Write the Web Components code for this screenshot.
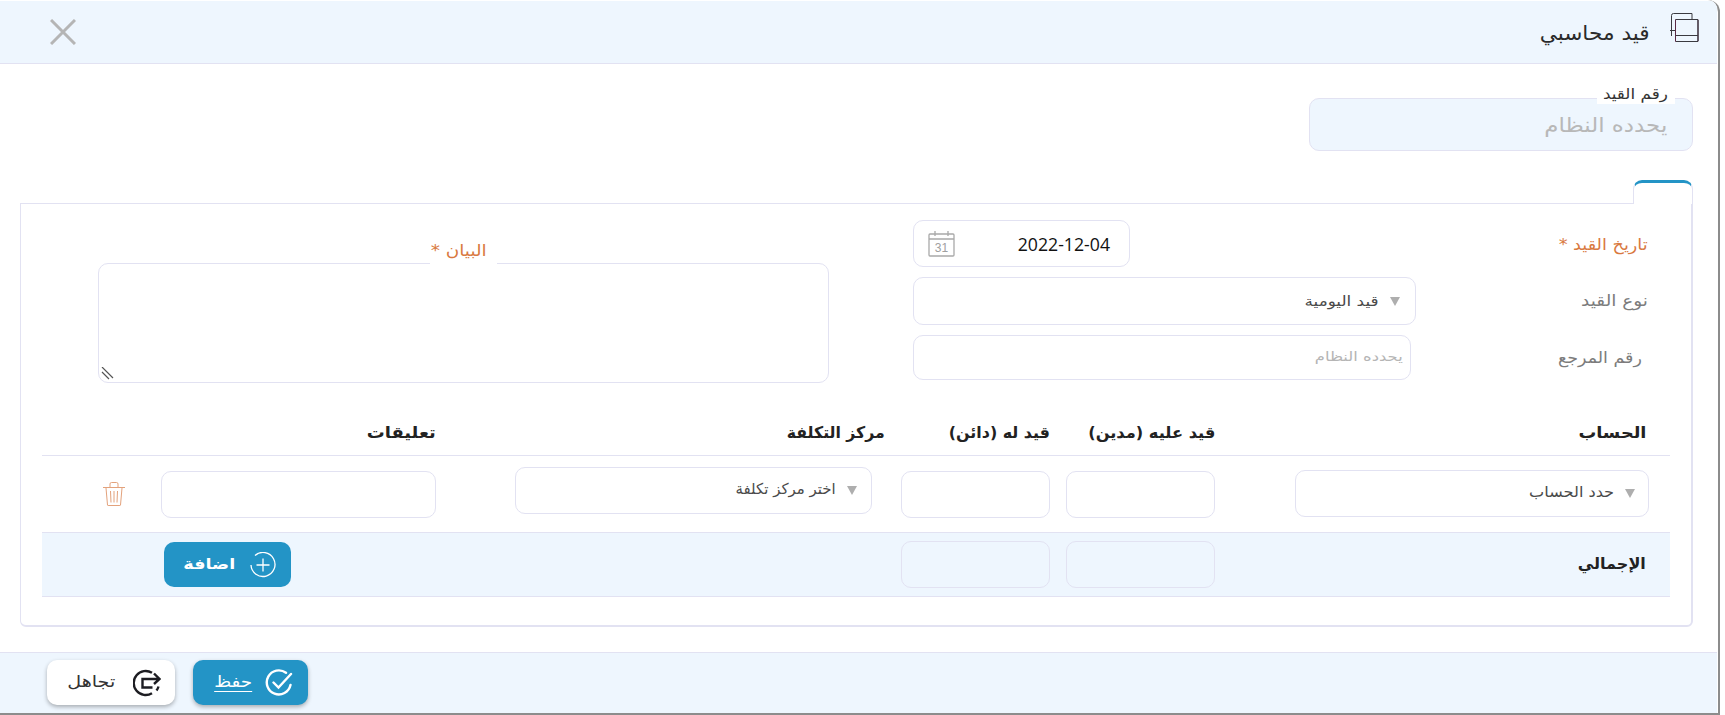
<!DOCTYPE html>
<html lang="ar" dir="rtl">
<head>
<meta charset="utf-8">
<title>قيد محاسبي</title>
<style>
  html, body { margin: 0; padding: 0; height: 100%; background: #fff; }
  body { font-family: "DejaVu Sans", "Noto Sans", sans-serif; overflow: hidden; }
</style>
</head>
<body>
<entry-dialog>
  <dialog-header slot="header"></dialog-header>
  <outlined-box slot="number"></outlined-box>
  <entry-form slot="form"></entry-form>
  <dialog-footer slot="footer"></dialog-footer>
</entry-dialog>

<script>
const FONT = '"DejaVu Sans", "Noto Sans", sans-serif';
const LINE = '#e2e2f2';
const TINT = '#eef6fe';
const BLUE = '#2394c6';

// the original arabic face is much wider than DejaVu, so stretch each label to its width
class FitText extends HTMLElement {
  constructor() {
    super();
    this.attachShadow({ mode: 'open' });
    this.shadowRoot.innerHTML = `
      <style>
        :host { display: inline-block; white-space: nowrap; font-family: ${FONT}; line-height: 1.3; }
        span { display: inline-block; transform-origin: 100% 50%; text-decoration: var(--deco, none); text-underline-offset: 4px; }
      </style>
      <span><slot></slot></span>
    `;
  }
  connectedCallback() {
    const size = this.getAttribute('size');
    const w = parseFloat(this.getAttribute('w'));
    if (size) this.style.fontSize = size + 'px';
    const inner = this.shadowRoot.querySelector('span');
    const natural = inner.getBoundingClientRect().width;
    if (w && natural) {
      inner.style.transform = `scaleX(${w / natural})`;
      this.style.width = w + 'px';
    }
  }
}

class EntryDialog extends HTMLElement {
  constructor() {
    super();
    this.attachShadow({ mode: 'open' });
    this.shadowRoot.innerHTML = `
      <style>
        :host { display: flex; flex-direction: column; width: 1720px; height: 715px; margin-right: 5px;
          box-sizing: border-box; background: #fff; border-right: 2px solid #8c8c8c; border-bottom: 2px solid #8c8c8c;
          border-top-right-radius: 12px; overflow: hidden; }
        .body { flex: 1; padding: 34px 25px 0 0; }
        .tabs { display: flex; margin-top: 29px; height: 23px; }
        .tab { width: 60px; height: 24px; box-sizing: border-box; border: 1px solid ${LINE}; border-top: 3px solid ${BLUE};
          border-bottom: 0; border-radius: 9px 9px 0 0; background: #fff; position: relative; z-index: 1; }
        .panel { margin-left: 20px; height: 424px; box-sizing: border-box; border: 1px solid ${LINE}; border-right-width: 2px; border-bottom-width: 2px;
          border-radius: 0 0 6px 6px; }
      </style>
      <slot name="header"></slot>
      <div class="body">
        <slot name="number"></slot>
        <div class="tabs"><div class="tab"></div></div>
        <div class="panel"><slot name="form"></slot></div>
      </div>
      <slot name="footer"></slot>
    `;
  }
}

class DialogHeader extends HTMLElement {
  constructor() {
    super();
    this.attachShadow({ mode: 'open' });
    this.shadowRoot.innerHTML = `
      <style>
        :host { display: flex; align-items: center; height: 63px; box-sizing: border-box; margin: 1px 1px 0 0; background: ${TINT};
          border-bottom: 1px solid ${LINE}; padding: 0 18px 0 50px; color: #2a2a2a; }
        svg.copy { display: block; margin-top: -10px; flex: none; }
        .title { flex: 1; margin-right: 20px; display: flex; margin-top: 2px; }
        svg.x { display: block; margin-top: -1px; flex: none; }
      </style>
      <svg class="copy" width="29" height="29" viewBox="0 0 29 29" fill="none" stroke="#3a3a40" stroke-width="1">
        <path d="M1.500 23V2.500a2 2 0 0 1 2-2H22V6"/>
        <path d="M0 17.500h5.500"/>
        <path d="M5.500 6.500h22.500v22H5.500z" stroke="#5a2a46"/>
        <path d="M5.500 22.500h22.500M6 6.500h22M28 7v21M6 28.500h22" stroke-width="1.200"/>
      </svg>
      <div class="title"><fit-text size="20" w="110">قيد محاسبي</fit-text></div>
      <svg class="x" width="26" height="26" viewBox="0 0 26 26" stroke="#b5b5b5" stroke-width="3"><path d="M1 1l24 24M25 1L1 25"/></svg>
    `;
  }
}

// input looking box with the small label that cuts the top border
class OutlinedBox extends HTMLElement {
  constructor() {
    super();
    this.attachShadow({ mode: 'open' });
    this.shadowRoot.innerHTML = `
      <style>
        :host { display: flex; align-items: center; width: 384px; height: 53px; box-sizing: border-box; position: relative; background: ${TINT};
          border: 1px solid ${LINE}; border-radius: 10px; padding-right: 25px; color: #b8b8b8; }
        label { position: absolute; top: -15px; right: 17px; width: 78px; height: 20px; background: #fff; box-sizing: border-box;
          padding-right: 7px; color: #333; display: block; }
      </style>
      <label><fit-text size="15" w="65">رقم القيد</fit-text></label>
      <fit-text size="20" w="123">يحدده النظام</fit-text>
    `;
  }
}

class FieldBox extends HTMLElement {
  static get observedAttributes() { return ['width', 'height']; }
  constructor() {
    super();
    this.attachShadow({ mode: 'open' });
    this.shadowRoot.innerHTML = `
      <style>
        :host { display: flex; align-items: center; box-sizing: border-box; flex: none; background: #fff; border: 1px solid ${LINE};
          border-radius: 10px; padding-right: 14px; font-family: ${FONT}; color: #4a4a4a; }
        :host([tinted]) { background: ${TINT}; }
        :host([dim]) { color: #b5b5b5; }
        .arrow { display: none; width: 0; height: 0; border-left: 5.500px solid transparent; border-right: 5.500px solid transparent;
          border-top: 9px solid #aeaeae; margin: 1px 0 0 11px; }
        :host([select]) .arrow { display: block; }
      </style>
      <i class="arrow"></i><slot></slot>
    `;
  }
  attributeChangedCallback() {
    this.style.width = this.getAttribute('width') + 'px';
    this.style.height = (this.getAttribute('height') || 47) + 'px';
  }
}

class EntryForm extends HTMLElement {
  constructor() {
    super();
    this.attachShadow({ mode: 'open' });
    this.shadowRoot.innerHTML = `
      <style>
        :host { display: block; font-family: ${FONT}; color: #222; }
        .top { display: flex; height: 203px; padding-top: 16px; box-sizing: border-box; }
        .fields { width: 778px; flex: none; display: grid; grid-template-columns: 275px 503px; row-gap: 10px; align-content: start; align-items: center; }
        .lbl { color: #7c7c7c; padding-right: 43px; white-space: nowrap; display: flex; }
        .req { color: #d9793f; margin-top: 3px; }
        .ctl { display: flex; justify-content: flex-end; }
        .area { flex: none; width: 731px; height: 120px; margin: 43px 84px 0 0; box-sizing: border-box; border: 1px solid ${LINE}; border-radius: 10px; position: relative; }
        .area label { position: absolute; top: -24px; right: 331px; width: 67px; height: 27px; background: #fff; box-sizing: border-box; padding: 1px 10px 0 0; color: #d9793f; display: block; }
        .area svg { position: absolute; left: 1px; bottom: 2px; }
        .table { margin: 0 21px; }
        .tr { display: grid; grid-template-columns: 21px 354px 80px 149px 16px 149px 29px 357px 79px 275px 1fr; align-items: center; }
        .head { height: 49px; border-bottom: 1px solid ${LINE}; font-weight: 700; padding-top: 4px; box-sizing: border-box; }
        .head div { white-space: nowrap; display: flex; }
        .row { height: 76px; }
        .total { height: 65px; background: ${TINT}; border-top: 1px solid ${LINE}; border-bottom: 1px solid ${LINE}; box-sizing: border-box; font-weight: 700; }
        .a { grid-column: 1 / 3; padding-right: 24px; display: flex; }
        .d { grid-column: 3 / 5; padding-right: 80px; }
        .c { grid-column: 5 / 7; padding-right: 16px; }
        .cc { grid-column: 7 / 9; padding-right: 16px; }
        .n { grid-column: 9 / 11; padding-right: 79px; }
        .trash { justify-self: start; margin-right: 36px; display: block; }
      </style>
      <div class="top">
        <div class="fields">
          <div class="lbl req"><fit-text size="16" w="89">تاريخ القيد *</fit-text></div>
          <div class="ctl"><field-box width="217" height="47" style="direction:ltr;padding:0 19px 0 14px;color:#111">
            <span style="display:flex;align-items:center;justify-content:space-between;width:182px;font-family:'Open Sans',sans-serif;font-size:17.700px">
              <svg width="27" height="26" viewBox="0 0 27 26" fill="none" stroke="#a9a9a9" stroke-width="1.300"><rect x="1" y="3" width="25" height="22" rx="1"/><path d="M1 8h25M7 0v5M20 0v5"/><text x="13.500" y="21" font-size="12" text-anchor="middle" stroke="none" fill="#a0a0a0" font-family="Liberation Sans">31</text></svg>
              <span>2022-12-04</span>
            </span>
          </field-box></div>
          <div class="lbl"><fit-text size="16" w="67">نوع القيد</fit-text></div>
          <div class="ctl"><field-box select width="503" height="48" style="padding-right:15px"><fit-text size="14" w="74">قيد اليومية</fit-text></field-box></div>
          <div class="lbl" style="padding-right:49px;margin-top:2px"><fit-text size="16" w="84">رقم المرجع</fit-text></div>
          <div class="ctl"><field-box dim width="498" height="45" style="padding-right:7px"><fit-text size="13" w="88">يحدده النظام</fit-text></field-box></div>
        </div>
        <div class="area">
          <label><fit-text size="16" w="56">البيان *</fit-text></label>
          <svg width="14" height="13" viewBox="0 0 14 13" stroke="#555" stroke-width="1.200"><path d="M2 0l11 11M2 5l7 7"/></svg>
        </div>
      </div>
      <div class="table">
        <div class="tr head">
          <div class="a"><fit-text size="16" w="68">الحساب</fit-text></div>
          <div class="d"><fit-text size="16" w="127">قيد عليه (مدين)</fit-text></div>
          <div class="c"><fit-text size="16" w="101">قيد له (دائن)</fit-text></div>
          <div class="cc"><fit-text size="16" w="98">مركز التكلفة</fit-text></div>
          <div class="n"><fit-text size="16" w="69">تعليقات</fit-text></div>
        </div>
        <div class="tr row">
          <field-box select width="354" height="47" style="grid-column:2;padding-right:13px;margin-top:-2px"><fit-text size="15" w="85">حدد الحساب</fit-text></field-box>
          <field-box width="149" height="47" style="grid-column:4"></field-box>
          <field-box width="149" height="47" style="grid-column:6"></field-box>
          <field-box select width="357" height="47" style="grid-column:8;padding-right:14px;margin-top:-8px"><fit-text size="15" w="100">اختر مركز تكلفة</fit-text></field-box>
          <field-box width="275" height="47" style="grid-column:10"></field-box>
          <svg class="trash" style="grid-column:11" width="22" height="24" viewBox="0 0 22 24" fill="none" stroke="#e3a27c" stroke-width="1"><path d="M0 5.500h22M7 5V2a1.500 1.500 0 0 1 1.500-1.500h5A1.500 1.500 0 0 1 15 2v3M3 6l1.500 17a.6.6 0 0 0 .6.5h11.800a.6.6 0 0 0 .6-.5L19 6M7.500 9l.5 11.500M11 9v11.500M14.500 9L14 20.500"/></svg>
        </div>
        <div class="tr total">
          <div class="a"><fit-text size="16" w="68">الإجمالي</fit-text></div>
          <field-box tinted width="149" height="47" style="grid-column:4"></field-box>
          <field-box tinted width="149" height="47" style="grid-column:6"></field-box>
          <action-button primary bold icon="plus" width="127" gap="14" style="grid-column:10;justify-self:end;margin-left:3px;padding-left:4px"><fit-text size="15" w="52">اضافة</fit-text></action-button>
        </div>
      </div>
    `;
  }
}

const ICONS = {
  plus: `<svg width="26" height="26" viewBox="0 0 26 26" fill="none" stroke="#fff" stroke-width="1.300"><path d="M5 3.500A12 12 0 1 1 1 13M13 6.500v13M6.500 13h13"/></svg>`,
  check: `<svg width="28" height="28" viewBox="0 0 28 28" fill="none" stroke="#fff" stroke-width="2.400" stroke-linecap="round"><path d="M21 3.800A12 12 0 1 0 25.500 16M8.500 13.500l5 5L26 5"/></svg>`,
  exit: `<svg width="28" height="28" viewBox="0 0 28 28" fill="none" stroke="#1d1d22" stroke-width="2.400"><path d="M19 3.800A12 12 0 1 0 19 24.200M25.500 17.500a12 12 0 0 1-2 4"/><path d="M26.500 10H9.500v8.500h10M21 4.500l5.500 5.500-5.500 5"/></svg>`
};

class ActionButton extends HTMLElement {
  constructor() {
    super();
    this.attachShadow({ mode: 'open' });
    this.shadowRoot.innerHTML = `
      <style>
        :host { display: flex; align-items: center; justify-content: center; height: 45px; box-sizing: border-box; border-radius: 10px;
          padding-left: 6px; background: #fff; color: #333; font-weight: 400; }
        :host([primary]) { background: ${BLUE}; color: #fff; }
        :host([bold]) { font-weight: 700; }
        :host([raised]) { box-shadow: 0 2px 4px rgba(0,0,0,.3); }
        svg { display: block; flex: none; }
      </style>
      ${ICONS[this.getAttribute('icon')] || ''}<slot></slot>
    `;
    this.style.width = this.getAttribute('width') + 'px';
    this.style.gap = (this.getAttribute('gap') || 12) + 'px';
  }
}

class DialogFooter extends HTMLElement {
  constructor() {
    super();
    this.attachShadow({ mode: 'open' });
    this.shadowRoot.innerHTML = `
      <style>
        :host { display: flex; gap: 18px; align-items: flex-start; justify-content: flex-end; height: 61px; box-sizing: border-box; background: ${TINT};
          border-top: 1px solid ${LINE}; padding: 7px 0 0 47px; margin-right: 1px; }
      </style>
      <action-button primary raised icon="check" gap="12" width="115"><fit-text size="16" w="38" style="--deco: underline">حفظ</fit-text></action-button>
      <action-button raised icon="exit" gap="17" width="128"><fit-text size="16" w="48">تجاهل</fit-text></action-button>
    `;
  }
}

customElements.define('field-box', FieldBox);
customElements.define('fit-text', FitText);
customElements.define('action-button', ActionButton);
customElements.define('dialog-header', DialogHeader);
customElements.define('outlined-box', OutlinedBox);
customElements.define('entry-form', EntryForm);
customElements.define('dialog-footer', DialogFooter);
customElements.define('entry-dialog', EntryDialog);
</script>
</body>
</html>
